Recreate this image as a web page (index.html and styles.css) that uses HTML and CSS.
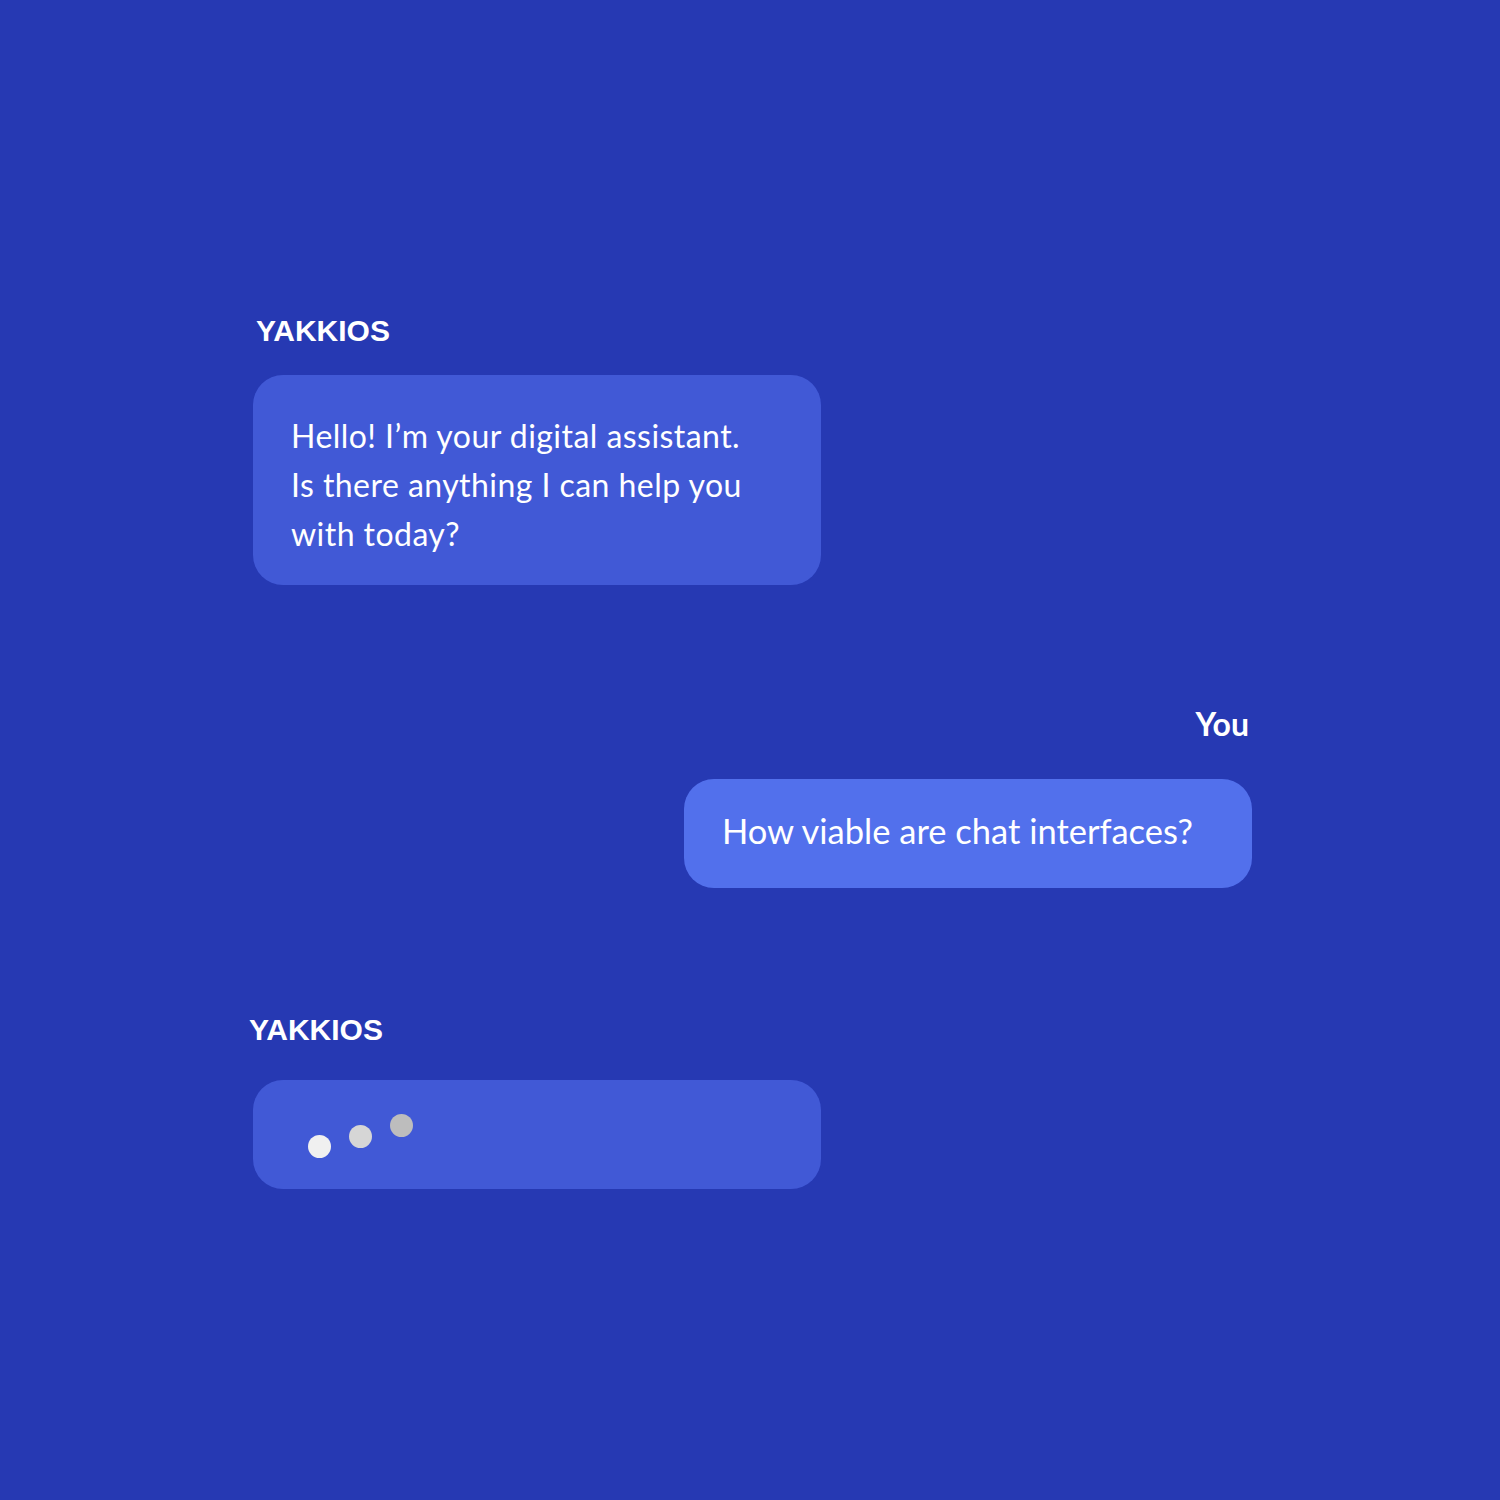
FILE: index.html
```html
<!DOCTYPE html>
<html lang="en">
<head>
<meta charset="utf-8">
<title>Chat</title>
<link rel="stylesheet" href="styles.css">
</head>
<body>
<main class="chat">
  <section class="msg msg-bot first">
    <div class="label label-bot">YAKKIOS</div>
    <div class="bubble bubble-bot">
      <p class="text">Hello! I’m your digital assistant.<br>Is there anything I can help you<br>with today?</p>
    </div>
  </section>
  <section class="msg msg-user">
    <div class="label label-user">You</div>
    <div class="bubble bubble-user">
      <p class="text text-user">How viable are chat interfaces?</p>
    </div>
  </section>
  <section class="msg msg-bot typing">
    <div class="label label-bot label-shift">YAKKIOS</div>
    <div class="bubble bubble-bot bubble-typing">
      <span class="dot dot1"></span>
      <span class="dot dot2"></span>
      <span class="dot dot3"></span>
    </div>
  </section>
</main>
</body>
</html>
```

FILE: styles.css
```css
html, body {
  margin: 0;
  padding: 0;
  background: #2639b3;
}
body {
  width: 1500px;
  height: 1500px;
  overflow: hidden;
}
.chat {
  display: flex;
  flex-direction: column;
  width: 999px;
  margin-left: 253px;
  padding-top: 313px;
}
.msg {
  display: flex;
  flex-direction: column;
}
.msg-bot {
  align-items: flex-start;
}
.msg-user {
  align-items: flex-end;
  margin-top: 121px;
}
.typing {
  margin-top: 124px;
}
.label {
  color: #ffffff;
  line-height: 36px;
}
.label-bot {
  font-family: "Liberation Sans", Arial, sans-serif;
  font-weight: 700;
  font-size: 30px;
  padding-left: 3px;
  margin-bottom: 26px;
}
.label-shift {
  padding-left: 0;
  margin-left: -4px;
  margin-bottom: 32px;
}
.label-user {
  font-family: Lato, "Open Sans", sans-serif;
  font-weight: 700;
  font-size: 32px;
  padding-right: 3px;
  margin-bottom: 37px;
}
.bubble {
  width: 568px;
  box-sizing: border-box;
  border-radius: 30px;
}
.bubble-bot {
  background: #4159d6;
  padding: 36px 38px 27px 38px;
}
.bubble-user {
  background: #5270ec;
  height: 109px;
  padding: 0 20px 5px 38px;
  display: flex;
  align-items: center;
}
.text {
  margin: 0;
  color: #ffffff;
  font-family: Lato, "Open Sans", sans-serif;
  font-size: 32px;
  letter-spacing: 0.45px;
  line-height: 49px;
}
.text-user {
  font-size: 34.5px;
  letter-spacing: 0;
  line-height: 44px;
  white-space: nowrap;
}
.bubble-typing {
  height: 109px;
  padding: 0 0 0 55px;
  display: flex;
  align-items: center;
  gap: 18px;
}
.dot {
  width: 23px;
  height: 23px;
  border-radius: 50%;
  display: block;
}
.dot1 {
  background: #f0f0f0;
  transform: translateY(12px);
}
.dot2 {
  background: #d6d6d6;
  transform: translateY(2px);
}
.dot3 {
  background: #bdbdbd;
  transform: translateY(-9px);
}
```
